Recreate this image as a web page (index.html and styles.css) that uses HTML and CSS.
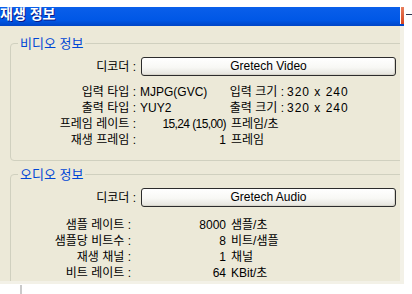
FILE: index.html
```html
<!DOCTYPE html>
<html lang="ko">
<head>
<meta charset="utf-8">
<title>재생 정보</title>
<link rel="stylesheet" href="styles.css">
</head>
<body>
<div class="screen">
  <div class="top-gap"></div>
  <div class="main">
    <div class="window">
      <div class="titlebar">
        <span class="title">재생 정보</span>
        <span class="close"></span>
      </div>
      <div class="client">
        <fieldset class="group group-video">
          <legend>비디오 정보</legend>
          <div class="decoder-row">
            <span class="label">디코더 :</span>
            <div class="button">Gretech Video</div>
          </div>
          <div class="rows rows-video">
            <div class="row">
              <span class="label">입력 타입 :</span>
              <span class="val1">MJPG(GVC)</span>
              <span class="label2">입력 크기 :</span>
              <span class="val2">320 x 240</span>
            </div>
            <div class="row">
              <span class="label">출력 타입 :</span>
              <span class="val1">YUY2</span>
              <span class="label2">출력 크기 :</span>
              <span class="val2">320 x 240</span>
            </div>
            <div class="row">
              <span class="label">프레임 레이트 :</span>
              <span class="num tight">15,24 (15,00)</span>
              <span class="unit">프레임/초</span>
            </div>
            <div class="row">
              <span class="label">재생 프레임 :</span>
              <span class="num">1</span>
              <span class="unit">프레임</span>
            </div>
          </div>
        </fieldset>
        <fieldset class="group group-audio">
          <legend>오디오 정보</legend>
          <div class="decoder-row">
            <span class="label">디코더 :</span>
            <div class="button">Gretech Audio</div>
          </div>
          <div class="rows rows-audio">
            <div class="row">
              <span class="label label-audio">샘플 레이트 :</span>
              <span class="num num-audio">8000</span>
              <span class="unit">샘플/초</span>
            </div>
            <div class="row">
              <span class="label label-audio">샘플당 비트수 :</span>
              <span class="num num-audio">8</span>
              <span class="unit">비트/샘플</span>
            </div>
            <div class="row">
              <span class="label label-audio">재생 채널 :</span>
              <span class="num num-audio">1</span>
              <span class="unit">채널</span>
            </div>
            <div class="row">
              <span class="label label-audio">비트 레이트 :</span>
              <span class="num num-audio">64</span>
              <span class="unit">KBit/초</span>
            </div>
          </div>
        </fieldset>
      </div>
    </div>
    <div class="side"><div class="side-line"></div></div>
  </div>
  <div class="below"></div>
</div>
</body>
</html>
```

FILE: styles.css
```css
html, body {
  margin: 0;
  padding: 0;
  background: #ffffff;
}
body {
  width: 412px;
  height: 294px;
  overflow: hidden;
  font-family: "Liberation Sans", "Noto Sans CJK KR", sans-serif;
  font-size: 12px;
  color: #000;
}
.screen {
  display: flex;
  flex-direction: column;
  width: 412px;
  height: 294px;
}
.top-gap {
  height: 7px;
  flex: none;
}
.main {
  display: flex;
  height: 277px;
  flex: none;
}
.window {
  width: 404px;
  display: flex;
  flex-direction: column;
  flex: none;
}
.titlebar {
  height: 19px;
  flex: none;
  display: flex;
  align-items: flex-start;
  background: linear-gradient(#0a5fea 0%, #0057e6 70%, #0045c6 100%);
}
.title {
  margin-top: 0;
  margin-left: 0;
  font-family: "Noto Sans CJK KR", sans-serif;
  font-weight: bold;
  font-size: 14px;
  line-height: 13px;
  color: #fff;
  text-shadow: 1px 1px 0 #0a1883;
  white-space: nowrap;
}
.close {
  margin-left: auto;
  width: 3px;
  height: 17px;
  border-left: 1px solid #ffffff;
  background: linear-gradient(#e8805e, #d4431f);
}
.client {
  flex: 1;
  background: #ece9d8;
  border-right: 4px solid #f3f1e7;
  border-bottom: 3px solid #f3f1e7;
  padding-left: 10px;
  overflow: hidden;
}
.group {
  margin: 10px -20px 0 0;
  padding: 6px 0 12px 0;
  border: 1px solid #d0d0bf;
  border-radius: 4px;
  min-width: 0;
}
.group-audio {
  margin-top: 6px;
}
.group legend {
  margin-left: 7px;
  padding: 0 2px;
  font-size: 13px;
  line-height: 15px;
  color: #0046d5;
  white-space: nowrap;
}
.decoder-row {
  display: flex;
  align-items: center;
  height: 19px;
}
.label {
  width: 125px;
  flex: none;
  text-align: right;
  white-space: nowrap;
  line-height: 16px;
}
.label-audio {
  width: 120px;
}
.button {
  margin-left: 5px;
  width: 253px;
  height: 17px;
  border: 1px solid #2c2c2c;
  border-radius: 3px;
  background: linear-gradient(#ffffff 0%, #f8f8f5 55%, #e4e3dc 100%);
  box-shadow: inset -1px -1px 0 #d8d6cc;
  text-align: center;
  line-height: 17px;
  white-space: nowrap;
}
.rows-video {
  margin-top: 8px;
}
.rows-audio {
  margin-top: 10px;
}
.row {
  display: flex;
  height: 16px;
  line-height: 16px;
  white-space: nowrap;
}
.val1 {
  width: 76px;
  padding-left: 4px;
  flex: none;
}
.label2 {
  width: 68px;
  flex: none;
  text-align: right;
}
.val2 {
  padding-left: 3px;
  letter-spacing: 1px;
}
.num {
  width: 90px;
  flex: none;
  text-align: right;
}
.num-audio {
  width: 95px;
}
.tight {
  letter-spacing: -0.6px;
}
.unit {
  padding-left: 5px;
}
.side {
  flex: 1;
  padding-left: 2px;
}
.side-line {
  margin-top: 7px;
  height: 1px;
  background: #2b3550;
}
.below {
  flex: 1;
  margin-left: 20px;
  margin-top: 1px;
  border-left: 2px solid #cacaca;
}
```
